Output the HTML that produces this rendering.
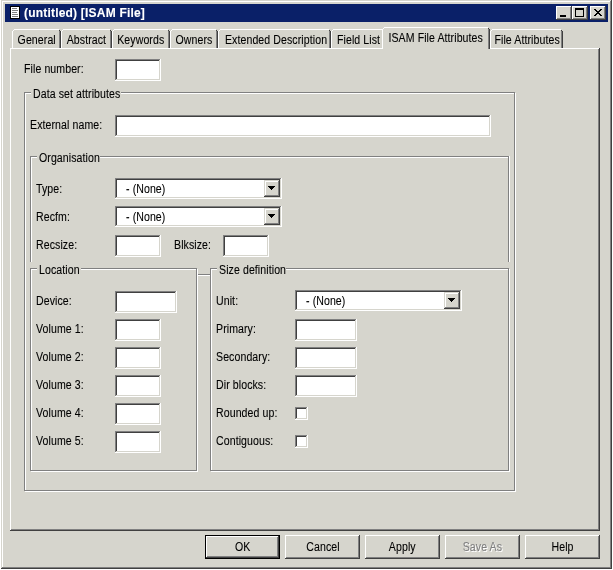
<!DOCTYPE html>
<html><head><meta charset="utf-8"><style>
html,body{margin:0;padding:0;width:613px;height:570px;overflow:hidden;background:#fff}
i{position:absolute;display:block}
.t{position:absolute;font-family:"Liberation Sans",sans-serif;font-size:12px;line-height:13px;white-space:nowrap;font-weight:normal;transform-origin:0 0;filter:grayscale(1);-webkit-text-stroke:0.1px currentColor;letter-spacing:0.1px}
.c{text-align:center;transform:none}
.c s{display:inline-block;text-decoration:none;transform-origin:50% 0}
.ic{position:absolute;display:block}
</style></head><body>
<i style="left:0px;top:0px;width:613px;height:570px;background:#ffffff"></i>
<i style="left:1px;top:0px;width:611px;height:569px;background:#d6d5cd"></i>
<i style="left:1px;top:0px;width:610px;height:1px;background:#d6d5cd"></i>
<i style="left:1px;top:0px;width:1px;height:568px;background:#d6d5cd"></i>
<i style="left:2px;top:1px;width:608px;height:1px;background:#ffffff"></i>
<i style="left:2px;top:1px;width:1px;height:566px;background:#ffffff"></i>
<i style="left:2px;top:567px;width:609px;height:1px;background:#808080"></i>
<i style="left:610px;top:1px;width:1px;height:567px;background:#808080"></i>
<i style="left:1px;top:568px;width:611px;height:1px;background:#404040"></i>
<i style="left:611px;top:0px;width:1px;height:569px;background:#404040"></i>
<i style="left:5px;top:4px;width:603px;height:18px;background:#0a2068"></i>
<i style="left:10px;top:6px;width:10px;height:13px;background:#000000"></i>
<i style="left:11px;top:7px;width:8px;height:11px;background:#ffffff"></i>
<i style="left:12px;top:8px;width:5px;height:1px;background:#808080"></i>
<i style="left:12px;top:10px;width:6px;height:1px;background:#808080"></i>
<i style="left:12px;top:12px;width:5px;height:1px;background:#808080"></i>
<i style="left:12px;top:14px;width:6px;height:1px;background:#808080"></i>
<i style="left:12px;top:16px;width:6px;height:1px;background:#808080"></i>
<b class="t" style="left:24px;top:7px;font-weight:bold;font-size:12px;color:#ffffff;transform:scaleX(1.0);letter-spacing:0.2px;">(untitled) [ISAM File]</b>
<i style="left:556px;top:6px;width:16px;height:14px;background:#d6d5cd"></i>
<i style="left:556px;top:6px;width:15px;height:1px;background:#ffffff"></i>
<i style="left:556px;top:6px;width:1px;height:13px;background:#ffffff"></i>
<i style="left:557px;top:7px;width:13px;height:1px;background:#d6d5cd"></i>
<i style="left:557px;top:7px;width:1px;height:11px;background:#d6d5cd"></i>
<i style="left:557px;top:18px;width:14px;height:1px;background:#808080"></i>
<i style="left:570px;top:7px;width:1px;height:12px;background:#808080"></i>
<i style="left:556px;top:19px;width:16px;height:1px;background:#404040"></i>
<i style="left:571px;top:6px;width:1px;height:14px;background:#404040"></i>
<i style="left:572px;top:6px;width:16px;height:14px;background:#d6d5cd"></i>
<i style="left:572px;top:6px;width:15px;height:1px;background:#ffffff"></i>
<i style="left:572px;top:6px;width:1px;height:13px;background:#ffffff"></i>
<i style="left:573px;top:7px;width:13px;height:1px;background:#d6d5cd"></i>
<i style="left:573px;top:7px;width:1px;height:11px;background:#d6d5cd"></i>
<i style="left:573px;top:18px;width:14px;height:1px;background:#808080"></i>
<i style="left:586px;top:7px;width:1px;height:12px;background:#808080"></i>
<i style="left:572px;top:19px;width:16px;height:1px;background:#404040"></i>
<i style="left:587px;top:6px;width:1px;height:14px;background:#404040"></i>
<i style="left:590px;top:6px;width:16px;height:14px;background:#d6d5cd"></i>
<i style="left:590px;top:6px;width:15px;height:1px;background:#ffffff"></i>
<i style="left:590px;top:6px;width:1px;height:13px;background:#ffffff"></i>
<i style="left:591px;top:7px;width:13px;height:1px;background:#d6d5cd"></i>
<i style="left:591px;top:7px;width:1px;height:11px;background:#d6d5cd"></i>
<i style="left:591px;top:18px;width:14px;height:1px;background:#808080"></i>
<i style="left:604px;top:7px;width:1px;height:12px;background:#808080"></i>
<i style="left:590px;top:19px;width:16px;height:1px;background:#404040"></i>
<i style="left:605px;top:6px;width:1px;height:14px;background:#404040"></i>
<i style="left:560px;top:15px;width:6px;height:2px;background:#000000"></i>
<i style="left:575px;top:8px;width:9px;height:9px;background:#000000"></i>
<i style="left:576px;top:10px;width:7px;height:6px;background:#d6d5cd"></i>
<svg class="ic" style="left:594px;top:9px" width="8" height="7" viewBox="0 0 8 7" shape-rendering="crispEdges"><rect x="0" y="0" width="2" height="1"/><rect x="6" y="0" width="2" height="1"/><rect x="1" y="1" width="2" height="1"/><rect x="5" y="1" width="2" height="1"/><rect x="2" y="2" width="2" height="1"/><rect x="4" y="2" width="2" height="1"/><rect x="3" y="3" width="2" height="1"/><rect x="3" y="3" width="2" height="1"/><rect x="4" y="4" width="2" height="1"/><rect x="2" y="4" width="2" height="1"/><rect x="5" y="5" width="2" height="1"/><rect x="1" y="5" width="2" height="1"/><rect x="6" y="6" width="2" height="1"/><rect x="0" y="6" width="2" height="1"/></svg>
<i style="left:10px;top:48px;width:589px;height:1px;background:#ffffff"></i>
<i style="left:10px;top:48px;width:1px;height:482px;background:#ffffff"></i>
<i style="left:11px;top:529px;width:588px;height:1px;background:#808080"></i>
<i style="left:598px;top:49px;width:1px;height:481px;background:#808080"></i>
<i style="left:10px;top:530px;width:590px;height:1px;background:#404040"></i>
<i style="left:599px;top:48px;width:1px;height:483px;background:#404040"></i>
<i style="left:12px;top:31px;width:1px;height:17px;background:#ffffff"></i>
<i style="left:13px;top:30px;width:1px;height:1px;background:#ffffff"></i>
<i style="left:14px;top:29px;width:45px;height:1px;background:#ffffff"></i>
<i style="left:59px;top:30px;width:1px;height:1px;background:#404040"></i>
<i style="left:59px;top:31px;width:1px;height:17px;background:#808080"></i>
<i style="left:60px;top:31px;width:1px;height:17px;background:#404040"></i>
<b class="t c" style="left:12px;top:34px;width:49px;color:#000000"><s style="transform:scaleX(0.88)">General</s></b>
<i style="left:61px;top:31px;width:1px;height:17px;background:#ffffff"></i>
<i style="left:62px;top:30px;width:1px;height:1px;background:#ffffff"></i>
<i style="left:63px;top:29px;width:47px;height:1px;background:#ffffff"></i>
<i style="left:110px;top:30px;width:1px;height:1px;background:#404040"></i>
<i style="left:110px;top:31px;width:1px;height:17px;background:#808080"></i>
<i style="left:111px;top:31px;width:1px;height:17px;background:#404040"></i>
<b class="t c" style="left:61px;top:34px;width:51px;color:#000000"><s style="transform:scaleX(0.88)">Abstract</s></b>
<i style="left:112px;top:31px;width:1px;height:17px;background:#ffffff"></i>
<i style="left:113px;top:30px;width:1px;height:1px;background:#ffffff"></i>
<i style="left:114px;top:29px;width:54px;height:1px;background:#ffffff"></i>
<i style="left:168px;top:30px;width:1px;height:1px;background:#404040"></i>
<i style="left:168px;top:31px;width:1px;height:17px;background:#808080"></i>
<i style="left:169px;top:31px;width:1px;height:17px;background:#404040"></i>
<b class="t c" style="left:112px;top:34px;width:58px;color:#000000"><s style="transform:scaleX(0.88)">Keywords</s></b>
<i style="left:170px;top:31px;width:1px;height:17px;background:#ffffff"></i>
<i style="left:171px;top:30px;width:1px;height:1px;background:#ffffff"></i>
<i style="left:172px;top:29px;width:44px;height:1px;background:#ffffff"></i>
<i style="left:216px;top:30px;width:1px;height:1px;background:#404040"></i>
<i style="left:216px;top:31px;width:1px;height:17px;background:#808080"></i>
<i style="left:217px;top:31px;width:1px;height:17px;background:#404040"></i>
<b class="t c" style="left:170px;top:34px;width:48px;color:#000000"><s style="transform:scaleX(0.88)">Owners</s></b>
<i style="left:218px;top:31px;width:1px;height:17px;background:#ffffff"></i>
<i style="left:219px;top:30px;width:1px;height:1px;background:#ffffff"></i>
<i style="left:220px;top:29px;width:109px;height:1px;background:#ffffff"></i>
<i style="left:329px;top:30px;width:1px;height:1px;background:#404040"></i>
<i style="left:329px;top:31px;width:1px;height:17px;background:#808080"></i>
<i style="left:330px;top:31px;width:1px;height:17px;background:#404040"></i>
<b class="t c" style="left:218px;top:34px;width:113px;color:#000000"><s style="transform:scaleX(0.88)">Extended Description</s></b>
<i style="left:331px;top:31px;width:1px;height:17px;background:#ffffff"></i>
<i style="left:332px;top:30px;width:1px;height:1px;background:#ffffff"></i>
<i style="left:333px;top:29px;width:51px;height:1px;background:#ffffff"></i>
<b class="t c" style="left:331px;top:34px;width:55px;color:#000000"><s style="transform:scaleX(0.88)">Field List</s></b>
<i style="left:490px;top:31px;width:1px;height:17px;background:#ffffff"></i>
<i style="left:491px;top:30px;width:1px;height:1px;background:#ffffff"></i>
<i style="left:492px;top:29px;width:69px;height:1px;background:#ffffff"></i>
<i style="left:561px;top:30px;width:1px;height:1px;background:#404040"></i>
<i style="left:561px;top:31px;width:1px;height:17px;background:#808080"></i>
<i style="left:562px;top:31px;width:1px;height:17px;background:#404040"></i>
<b class="t c" style="left:490px;top:34px;width:73px;color:#000000"><s style="transform:scaleX(0.88)">File Attributes</s></b>
<i style="left:382px;top:27px;width:108px;height:22px;background:#d6d5cd"></i>
<i style="left:382px;top:29px;width:1px;height:20px;background:#ffffff"></i>
<i style="left:383px;top:28px;width:1px;height:1px;background:#ffffff"></i>
<i style="left:384px;top:27px;width:104px;height:1px;background:#ffffff"></i>
<i style="left:488px;top:28px;width:1px;height:1px;background:#404040"></i>
<i style="left:488px;top:29px;width:1px;height:20px;background:#808080"></i>
<i style="left:489px;top:29px;width:1px;height:20px;background:#404040"></i>
<b class="t c" style="left:382px;top:32px;width:108px;color:#000000"><s style="transform:scaleX(0.88)">ISAM File Attributes</s></b>
<b class="t" style="left:24px;top:63px;font-size:12px;color:#000000;transform:scaleX(0.88);">File number:</b>
<i style="left:115px;top:59px;width:46px;height:22px;background:#ffffff"></i>
<i style="left:115px;top:59px;width:45px;height:1px;background:#808080"></i>
<i style="left:115px;top:59px;width:1px;height:21px;background:#808080"></i>
<i style="left:116px;top:60px;width:43px;height:1px;background:#404040"></i>
<i style="left:116px;top:60px;width:1px;height:19px;background:#404040"></i>
<i style="left:116px;top:79px;width:44px;height:1px;background:#d6d5cd"></i>
<i style="left:159px;top:60px;width:1px;height:20px;background:#d6d5cd"></i>
<i style="left:115px;top:80px;width:46px;height:1px;background:#ffffff"></i>
<i style="left:160px;top:59px;width:1px;height:22px;background:#ffffff"></i>
<i style="left:25px;top:93px;width:491px;height:1px;background:#ffffff"></i>
<i style="left:25px;top:93px;width:1px;height:399px;background:#ffffff"></i>
<i style="left:25px;top:491px;width:491px;height:1px;background:#ffffff"></i>
<i style="left:515px;top:93px;width:1px;height:399px;background:#ffffff"></i>
<i style="left:24px;top:92px;width:491px;height:1px;background:#808080"></i>
<i style="left:24px;top:92px;width:1px;height:399px;background:#808080"></i>
<i style="left:24px;top:490px;width:491px;height:1px;background:#808080"></i>
<i style="left:514px;top:92px;width:1px;height:399px;background:#808080"></i>
<i style="left:25px;top:93px;width:489px;height:1px;background:#ffffff"></i>
<i style="left:25px;top:93px;width:1px;height:397px;background:#ffffff"></i>
<i style="left:31px;top:92px;width:90px;height:2px;background:#d6d5cd"></i>
<b class="t" style="left:33px;top:88px;font-size:12px;color:#000000;transform:scaleX(0.88);">Data set attributes</b>
<b class="t" style="left:30px;top:119px;font-size:12px;color:#000000;transform:scaleX(0.88);">External name:</b>
<i style="left:115px;top:115px;width:376px;height:22px;background:#ffffff"></i>
<i style="left:115px;top:115px;width:375px;height:1px;background:#808080"></i>
<i style="left:115px;top:115px;width:1px;height:21px;background:#808080"></i>
<i style="left:116px;top:116px;width:373px;height:1px;background:#404040"></i>
<i style="left:116px;top:116px;width:1px;height:19px;background:#404040"></i>
<i style="left:116px;top:135px;width:374px;height:1px;background:#d6d5cd"></i>
<i style="left:489px;top:116px;width:1px;height:20px;background:#d6d5cd"></i>
<i style="left:115px;top:136px;width:376px;height:1px;background:#ffffff"></i>
<i style="left:490px;top:115px;width:1px;height:22px;background:#ffffff"></i>
<i style="left:30px;top:156px;width:1px;height:106px;background:#808080"></i>
<i style="left:31px;top:157px;width:1px;height:105px;background:#ffffff"></i>
<i style="left:508px;top:156px;width:1px;height:106px;background:#808080"></i>
<i style="left:509px;top:156px;width:1px;height:106px;background:#ffffff"></i>
<i style="left:30px;top:156px;width:479px;height:1px;background:#808080"></i>
<i style="left:31px;top:157px;width:477px;height:1px;background:#ffffff"></i>
<i style="left:37px;top:156px;width:63px;height:2px;background:#d6d5cd"></i>
<b class="t" style="left:39px;top:152px;font-size:12px;color:#000000;transform:scaleX(0.88);">Organisation</b>
<b class="t" style="left:36px;top:183px;font-size:12px;color:#000000;transform:scaleX(0.88);">Type:</b>
<i style="left:115px;top:178px;width:167px;height:21px;background:#ffffff"></i>
<i style="left:115px;top:178px;width:166px;height:1px;background:#808080"></i>
<i style="left:115px;top:178px;width:1px;height:20px;background:#808080"></i>
<i style="left:116px;top:179px;width:164px;height:1px;background:#404040"></i>
<i style="left:116px;top:179px;width:1px;height:18px;background:#404040"></i>
<i style="left:116px;top:197px;width:165px;height:1px;background:#d6d5cd"></i>
<i style="left:280px;top:179px;width:1px;height:19px;background:#d6d5cd"></i>
<i style="left:115px;top:198px;width:167px;height:1px;background:#ffffff"></i>
<i style="left:281px;top:178px;width:1px;height:21px;background:#ffffff"></i>
<i style="left:264px;top:180px;width:16px;height:17px;background:#d6d5cd"></i>
<i style="left:264px;top:180px;width:15px;height:1px;background:#d6d5cd"></i>
<i style="left:264px;top:180px;width:1px;height:16px;background:#d6d5cd"></i>
<i style="left:265px;top:181px;width:13px;height:1px;background:#ffffff"></i>
<i style="left:265px;top:181px;width:1px;height:14px;background:#ffffff"></i>
<i style="left:265px;top:195px;width:14px;height:1px;background:#808080"></i>
<i style="left:278px;top:181px;width:1px;height:15px;background:#808080"></i>
<i style="left:264px;top:196px;width:16px;height:1px;background:#404040"></i>
<i style="left:279px;top:180px;width:1px;height:17px;background:#404040"></i>
<i style="left:268px;top:186px;width:7px;height:1px;background:#000000"></i>
<i style="left:269px;top:187px;width:5px;height:1px;background:#000000"></i>
<i style="left:270px;top:188px;width:3px;height:1px;background:#000000"></i>
<i style="left:271px;top:189px;width:1px;height:1px;background:#000000"></i>
<b class="t" style="left:126px;top:183px;font-size:12px;color:#000000;transform:scaleX(0.88);">- (None)</b>
<b class="t" style="left:36px;top:211px;font-size:12px;color:#000000;transform:scaleX(0.88);">Recfm:</b>
<i style="left:115px;top:206px;width:167px;height:21px;background:#ffffff"></i>
<i style="left:115px;top:206px;width:166px;height:1px;background:#808080"></i>
<i style="left:115px;top:206px;width:1px;height:20px;background:#808080"></i>
<i style="left:116px;top:207px;width:164px;height:1px;background:#404040"></i>
<i style="left:116px;top:207px;width:1px;height:18px;background:#404040"></i>
<i style="left:116px;top:225px;width:165px;height:1px;background:#d6d5cd"></i>
<i style="left:280px;top:207px;width:1px;height:19px;background:#d6d5cd"></i>
<i style="left:115px;top:226px;width:167px;height:1px;background:#ffffff"></i>
<i style="left:281px;top:206px;width:1px;height:21px;background:#ffffff"></i>
<i style="left:264px;top:208px;width:16px;height:17px;background:#d6d5cd"></i>
<i style="left:264px;top:208px;width:15px;height:1px;background:#d6d5cd"></i>
<i style="left:264px;top:208px;width:1px;height:16px;background:#d6d5cd"></i>
<i style="left:265px;top:209px;width:13px;height:1px;background:#ffffff"></i>
<i style="left:265px;top:209px;width:1px;height:14px;background:#ffffff"></i>
<i style="left:265px;top:223px;width:14px;height:1px;background:#808080"></i>
<i style="left:278px;top:209px;width:1px;height:15px;background:#808080"></i>
<i style="left:264px;top:224px;width:16px;height:1px;background:#404040"></i>
<i style="left:279px;top:208px;width:1px;height:17px;background:#404040"></i>
<i style="left:268px;top:214px;width:7px;height:1px;background:#000000"></i>
<i style="left:269px;top:215px;width:5px;height:1px;background:#000000"></i>
<i style="left:270px;top:216px;width:3px;height:1px;background:#000000"></i>
<i style="left:271px;top:217px;width:1px;height:1px;background:#000000"></i>
<b class="t" style="left:126px;top:211px;font-size:12px;color:#000000;transform:scaleX(0.88);">- (None)</b>
<b class="t" style="left:36px;top:239px;font-size:12px;color:#000000;transform:scaleX(0.88);">Recsize:</b>
<i style="left:115px;top:235px;width:46px;height:22px;background:#ffffff"></i>
<i style="left:115px;top:235px;width:45px;height:1px;background:#808080"></i>
<i style="left:115px;top:235px;width:1px;height:21px;background:#808080"></i>
<i style="left:116px;top:236px;width:43px;height:1px;background:#404040"></i>
<i style="left:116px;top:236px;width:1px;height:19px;background:#404040"></i>
<i style="left:116px;top:255px;width:44px;height:1px;background:#d6d5cd"></i>
<i style="left:159px;top:236px;width:1px;height:20px;background:#d6d5cd"></i>
<i style="left:115px;top:256px;width:46px;height:1px;background:#ffffff"></i>
<i style="left:160px;top:235px;width:1px;height:22px;background:#ffffff"></i>
<b class="t" style="left:174px;top:239px;font-size:12px;color:#000000;transform:scaleX(0.88);">Blksize:</b>
<i style="left:223px;top:235px;width:46px;height:22px;background:#ffffff"></i>
<i style="left:223px;top:235px;width:45px;height:1px;background:#808080"></i>
<i style="left:223px;top:235px;width:1px;height:21px;background:#808080"></i>
<i style="left:224px;top:236px;width:43px;height:1px;background:#404040"></i>
<i style="left:224px;top:236px;width:1px;height:19px;background:#404040"></i>
<i style="left:224px;top:255px;width:44px;height:1px;background:#d6d5cd"></i>
<i style="left:267px;top:236px;width:1px;height:20px;background:#d6d5cd"></i>
<i style="left:223px;top:256px;width:46px;height:1px;background:#ffffff"></i>
<i style="left:268px;top:235px;width:1px;height:22px;background:#ffffff"></i>
<i style="left:197px;top:274px;width:13px;height:1px;background:#808080"></i>
<i style="left:197px;top:275px;width:13px;height:1px;background:#ffffff"></i>
<i style="left:31px;top:269px;width:167px;height:1px;background:#ffffff"></i>
<i style="left:31px;top:269px;width:1px;height:203px;background:#ffffff"></i>
<i style="left:31px;top:471px;width:167px;height:1px;background:#ffffff"></i>
<i style="left:197px;top:269px;width:1px;height:203px;background:#ffffff"></i>
<i style="left:30px;top:268px;width:167px;height:1px;background:#808080"></i>
<i style="left:30px;top:268px;width:1px;height:203px;background:#808080"></i>
<i style="left:30px;top:470px;width:167px;height:1px;background:#808080"></i>
<i style="left:196px;top:268px;width:1px;height:203px;background:#808080"></i>
<i style="left:31px;top:269px;width:165px;height:1px;background:#ffffff"></i>
<i style="left:31px;top:269px;width:1px;height:201px;background:#ffffff"></i>
<i style="left:37px;top:268px;width:44px;height:2px;background:#d6d5cd"></i>
<b class="t" style="left:39px;top:264px;font-size:12px;color:#000000;transform:scaleX(0.88);">Location</b>
<b class="t" style="left:36px;top:295px;font-size:12px;color:#000000;transform:scaleX(0.88);">Device:</b>
<i style="left:115px;top:291px;width:62px;height:22px;background:#ffffff"></i>
<i style="left:115px;top:291px;width:61px;height:1px;background:#808080"></i>
<i style="left:115px;top:291px;width:1px;height:21px;background:#808080"></i>
<i style="left:116px;top:292px;width:59px;height:1px;background:#404040"></i>
<i style="left:116px;top:292px;width:1px;height:19px;background:#404040"></i>
<i style="left:116px;top:311px;width:60px;height:1px;background:#d6d5cd"></i>
<i style="left:175px;top:292px;width:1px;height:20px;background:#d6d5cd"></i>
<i style="left:115px;top:312px;width:62px;height:1px;background:#ffffff"></i>
<i style="left:176px;top:291px;width:1px;height:22px;background:#ffffff"></i>
<b class="t" style="left:36px;top:323px;font-size:12px;color:#000000;transform:scaleX(0.88);">Volume 1:</b>
<i style="left:115px;top:319px;width:46px;height:22px;background:#ffffff"></i>
<i style="left:115px;top:319px;width:45px;height:1px;background:#808080"></i>
<i style="left:115px;top:319px;width:1px;height:21px;background:#808080"></i>
<i style="left:116px;top:320px;width:43px;height:1px;background:#404040"></i>
<i style="left:116px;top:320px;width:1px;height:19px;background:#404040"></i>
<i style="left:116px;top:339px;width:44px;height:1px;background:#d6d5cd"></i>
<i style="left:159px;top:320px;width:1px;height:20px;background:#d6d5cd"></i>
<i style="left:115px;top:340px;width:46px;height:1px;background:#ffffff"></i>
<i style="left:160px;top:319px;width:1px;height:22px;background:#ffffff"></i>
<b class="t" style="left:36px;top:351px;font-size:12px;color:#000000;transform:scaleX(0.88);">Volume 2:</b>
<i style="left:115px;top:347px;width:46px;height:22px;background:#ffffff"></i>
<i style="left:115px;top:347px;width:45px;height:1px;background:#808080"></i>
<i style="left:115px;top:347px;width:1px;height:21px;background:#808080"></i>
<i style="left:116px;top:348px;width:43px;height:1px;background:#404040"></i>
<i style="left:116px;top:348px;width:1px;height:19px;background:#404040"></i>
<i style="left:116px;top:367px;width:44px;height:1px;background:#d6d5cd"></i>
<i style="left:159px;top:348px;width:1px;height:20px;background:#d6d5cd"></i>
<i style="left:115px;top:368px;width:46px;height:1px;background:#ffffff"></i>
<i style="left:160px;top:347px;width:1px;height:22px;background:#ffffff"></i>
<b class="t" style="left:36px;top:379px;font-size:12px;color:#000000;transform:scaleX(0.88);">Volume 3:</b>
<i style="left:115px;top:375px;width:46px;height:22px;background:#ffffff"></i>
<i style="left:115px;top:375px;width:45px;height:1px;background:#808080"></i>
<i style="left:115px;top:375px;width:1px;height:21px;background:#808080"></i>
<i style="left:116px;top:376px;width:43px;height:1px;background:#404040"></i>
<i style="left:116px;top:376px;width:1px;height:19px;background:#404040"></i>
<i style="left:116px;top:395px;width:44px;height:1px;background:#d6d5cd"></i>
<i style="left:159px;top:376px;width:1px;height:20px;background:#d6d5cd"></i>
<i style="left:115px;top:396px;width:46px;height:1px;background:#ffffff"></i>
<i style="left:160px;top:375px;width:1px;height:22px;background:#ffffff"></i>
<b class="t" style="left:36px;top:407px;font-size:12px;color:#000000;transform:scaleX(0.88);">Volume 4:</b>
<i style="left:115px;top:403px;width:46px;height:22px;background:#ffffff"></i>
<i style="left:115px;top:403px;width:45px;height:1px;background:#808080"></i>
<i style="left:115px;top:403px;width:1px;height:21px;background:#808080"></i>
<i style="left:116px;top:404px;width:43px;height:1px;background:#404040"></i>
<i style="left:116px;top:404px;width:1px;height:19px;background:#404040"></i>
<i style="left:116px;top:423px;width:44px;height:1px;background:#d6d5cd"></i>
<i style="left:159px;top:404px;width:1px;height:20px;background:#d6d5cd"></i>
<i style="left:115px;top:424px;width:46px;height:1px;background:#ffffff"></i>
<i style="left:160px;top:403px;width:1px;height:22px;background:#ffffff"></i>
<b class="t" style="left:36px;top:435px;font-size:12px;color:#000000;transform:scaleX(0.88);">Volume 5:</b>
<i style="left:115px;top:431px;width:46px;height:22px;background:#ffffff"></i>
<i style="left:115px;top:431px;width:45px;height:1px;background:#808080"></i>
<i style="left:115px;top:431px;width:1px;height:21px;background:#808080"></i>
<i style="left:116px;top:432px;width:43px;height:1px;background:#404040"></i>
<i style="left:116px;top:432px;width:1px;height:19px;background:#404040"></i>
<i style="left:116px;top:451px;width:44px;height:1px;background:#d6d5cd"></i>
<i style="left:159px;top:432px;width:1px;height:20px;background:#d6d5cd"></i>
<i style="left:115px;top:452px;width:46px;height:1px;background:#ffffff"></i>
<i style="left:160px;top:431px;width:1px;height:22px;background:#ffffff"></i>
<i style="left:211px;top:269px;width:299px;height:1px;background:#ffffff"></i>
<i style="left:211px;top:269px;width:1px;height:203px;background:#ffffff"></i>
<i style="left:211px;top:471px;width:299px;height:1px;background:#ffffff"></i>
<i style="left:509px;top:269px;width:1px;height:203px;background:#ffffff"></i>
<i style="left:210px;top:268px;width:299px;height:1px;background:#808080"></i>
<i style="left:210px;top:268px;width:1px;height:203px;background:#808080"></i>
<i style="left:210px;top:470px;width:299px;height:1px;background:#808080"></i>
<i style="left:508px;top:268px;width:1px;height:203px;background:#808080"></i>
<i style="left:211px;top:269px;width:297px;height:1px;background:#ffffff"></i>
<i style="left:211px;top:269px;width:1px;height:201px;background:#ffffff"></i>
<i style="left:217px;top:268px;width:69px;height:2px;background:#d6d5cd"></i>
<b class="t" style="left:219px;top:264px;font-size:12px;color:#000000;transform:scaleX(0.88);">Size definition</b>
<b class="t" style="left:216px;top:295px;font-size:12px;color:#000000;transform:scaleX(0.88);">Unit:</b>
<i style="left:295px;top:290px;width:167px;height:21px;background:#ffffff"></i>
<i style="left:295px;top:290px;width:166px;height:1px;background:#808080"></i>
<i style="left:295px;top:290px;width:1px;height:20px;background:#808080"></i>
<i style="left:296px;top:291px;width:164px;height:1px;background:#404040"></i>
<i style="left:296px;top:291px;width:1px;height:18px;background:#404040"></i>
<i style="left:296px;top:309px;width:165px;height:1px;background:#d6d5cd"></i>
<i style="left:460px;top:291px;width:1px;height:19px;background:#d6d5cd"></i>
<i style="left:295px;top:310px;width:167px;height:1px;background:#ffffff"></i>
<i style="left:461px;top:290px;width:1px;height:21px;background:#ffffff"></i>
<i style="left:444px;top:292px;width:16px;height:17px;background:#d6d5cd"></i>
<i style="left:444px;top:292px;width:15px;height:1px;background:#d6d5cd"></i>
<i style="left:444px;top:292px;width:1px;height:16px;background:#d6d5cd"></i>
<i style="left:445px;top:293px;width:13px;height:1px;background:#ffffff"></i>
<i style="left:445px;top:293px;width:1px;height:14px;background:#ffffff"></i>
<i style="left:445px;top:307px;width:14px;height:1px;background:#808080"></i>
<i style="left:458px;top:293px;width:1px;height:15px;background:#808080"></i>
<i style="left:444px;top:308px;width:16px;height:1px;background:#404040"></i>
<i style="left:459px;top:292px;width:1px;height:17px;background:#404040"></i>
<i style="left:448px;top:298px;width:7px;height:1px;background:#000000"></i>
<i style="left:449px;top:299px;width:5px;height:1px;background:#000000"></i>
<i style="left:450px;top:300px;width:3px;height:1px;background:#000000"></i>
<i style="left:451px;top:301px;width:1px;height:1px;background:#000000"></i>
<b class="t" style="left:306px;top:295px;font-size:12px;color:#000000;transform:scaleX(0.88);">- (None)</b>
<b class="t" style="left:216px;top:323px;font-size:12px;color:#000000;transform:scaleX(0.88);">Primary:</b>
<i style="left:295px;top:319px;width:62px;height:22px;background:#ffffff"></i>
<i style="left:295px;top:319px;width:61px;height:1px;background:#808080"></i>
<i style="left:295px;top:319px;width:1px;height:21px;background:#808080"></i>
<i style="left:296px;top:320px;width:59px;height:1px;background:#404040"></i>
<i style="left:296px;top:320px;width:1px;height:19px;background:#404040"></i>
<i style="left:296px;top:339px;width:60px;height:1px;background:#d6d5cd"></i>
<i style="left:355px;top:320px;width:1px;height:20px;background:#d6d5cd"></i>
<i style="left:295px;top:340px;width:62px;height:1px;background:#ffffff"></i>
<i style="left:356px;top:319px;width:1px;height:22px;background:#ffffff"></i>
<b class="t" style="left:216px;top:351px;font-size:12px;color:#000000;transform:scaleX(0.88);">Secondary:</b>
<i style="left:295px;top:347px;width:62px;height:22px;background:#ffffff"></i>
<i style="left:295px;top:347px;width:61px;height:1px;background:#808080"></i>
<i style="left:295px;top:347px;width:1px;height:21px;background:#808080"></i>
<i style="left:296px;top:348px;width:59px;height:1px;background:#404040"></i>
<i style="left:296px;top:348px;width:1px;height:19px;background:#404040"></i>
<i style="left:296px;top:367px;width:60px;height:1px;background:#d6d5cd"></i>
<i style="left:355px;top:348px;width:1px;height:20px;background:#d6d5cd"></i>
<i style="left:295px;top:368px;width:62px;height:1px;background:#ffffff"></i>
<i style="left:356px;top:347px;width:1px;height:22px;background:#ffffff"></i>
<b class="t" style="left:216px;top:379px;font-size:12px;color:#000000;transform:scaleX(0.88);">Dir blocks:</b>
<i style="left:295px;top:375px;width:62px;height:22px;background:#ffffff"></i>
<i style="left:295px;top:375px;width:61px;height:1px;background:#808080"></i>
<i style="left:295px;top:375px;width:1px;height:21px;background:#808080"></i>
<i style="left:296px;top:376px;width:59px;height:1px;background:#404040"></i>
<i style="left:296px;top:376px;width:1px;height:19px;background:#404040"></i>
<i style="left:296px;top:395px;width:60px;height:1px;background:#d6d5cd"></i>
<i style="left:355px;top:376px;width:1px;height:20px;background:#d6d5cd"></i>
<i style="left:295px;top:396px;width:62px;height:1px;background:#ffffff"></i>
<i style="left:356px;top:375px;width:1px;height:22px;background:#ffffff"></i>
<b class="t" style="left:216px;top:407px;font-size:12px;color:#000000;transform:scaleX(0.88);">Rounded up:</b>
<i style="left:295px;top:407px;width:13px;height:13px;background:#ffffff"></i>
<i style="left:295px;top:407px;width:12px;height:1px;background:#808080"></i>
<i style="left:295px;top:407px;width:1px;height:12px;background:#808080"></i>
<i style="left:296px;top:408px;width:10px;height:1px;background:#404040"></i>
<i style="left:296px;top:408px;width:1px;height:10px;background:#404040"></i>
<i style="left:296px;top:418px;width:11px;height:1px;background:#d6d5cd"></i>
<i style="left:306px;top:408px;width:1px;height:11px;background:#d6d5cd"></i>
<i style="left:295px;top:419px;width:13px;height:1px;background:#ffffff"></i>
<i style="left:307px;top:407px;width:1px;height:13px;background:#ffffff"></i>
<b class="t" style="left:216px;top:435px;font-size:12px;color:#000000;transform:scaleX(0.88);">Contiguous:</b>
<i style="left:295px;top:435px;width:13px;height:13px;background:#ffffff"></i>
<i style="left:295px;top:435px;width:12px;height:1px;background:#808080"></i>
<i style="left:295px;top:435px;width:1px;height:12px;background:#808080"></i>
<i style="left:296px;top:436px;width:10px;height:1px;background:#404040"></i>
<i style="left:296px;top:436px;width:1px;height:10px;background:#404040"></i>
<i style="left:296px;top:446px;width:11px;height:1px;background:#d6d5cd"></i>
<i style="left:306px;top:436px;width:1px;height:11px;background:#d6d5cd"></i>
<i style="left:295px;top:447px;width:13px;height:1px;background:#ffffff"></i>
<i style="left:307px;top:435px;width:1px;height:13px;background:#ffffff"></i>
<i style="left:205px;top:535px;width:75px;height:24px;background:#000000"></i>
<i style="left:206px;top:536px;width:73px;height:22px;background:#d6d5cd"></i>
<i style="left:206px;top:536px;width:72px;height:1px;background:#ffffff"></i>
<i style="left:206px;top:536px;width:1px;height:21px;background:#ffffff"></i>
<i style="left:207px;top:537px;width:70px;height:1px;background:#d6d5cd"></i>
<i style="left:207px;top:537px;width:1px;height:19px;background:#d6d5cd"></i>
<i style="left:207px;top:556px;width:71px;height:1px;background:#808080"></i>
<i style="left:277px;top:537px;width:1px;height:20px;background:#808080"></i>
<i style="left:206px;top:557px;width:73px;height:1px;background:#404040"></i>
<i style="left:278px;top:536px;width:1px;height:22px;background:#404040"></i>
<b class="t c" style="left:205px;top:541px;width:75px;color:#000000"><s style="transform:scaleX(0.88)">OK</s></b>
<i style="left:285px;top:535px;width:75px;height:24px;background:#d6d5cd"></i>
<i style="left:285px;top:535px;width:74px;height:1px;background:#ffffff"></i>
<i style="left:285px;top:535px;width:1px;height:23px;background:#ffffff"></i>
<i style="left:286px;top:536px;width:72px;height:1px;background:#d6d5cd"></i>
<i style="left:286px;top:536px;width:1px;height:21px;background:#d6d5cd"></i>
<i style="left:286px;top:557px;width:73px;height:1px;background:#808080"></i>
<i style="left:358px;top:536px;width:1px;height:22px;background:#808080"></i>
<i style="left:285px;top:558px;width:75px;height:1px;background:#404040"></i>
<i style="left:359px;top:535px;width:1px;height:24px;background:#404040"></i>
<b class="t c" style="left:285px;top:541px;width:75px;color:#000000"><s style="transform:scaleX(0.88)">Cancel</s></b>
<i style="left:365px;top:535px;width:75px;height:24px;background:#d6d5cd"></i>
<i style="left:365px;top:535px;width:74px;height:1px;background:#ffffff"></i>
<i style="left:365px;top:535px;width:1px;height:23px;background:#ffffff"></i>
<i style="left:366px;top:536px;width:72px;height:1px;background:#d6d5cd"></i>
<i style="left:366px;top:536px;width:1px;height:21px;background:#d6d5cd"></i>
<i style="left:366px;top:557px;width:73px;height:1px;background:#808080"></i>
<i style="left:438px;top:536px;width:1px;height:22px;background:#808080"></i>
<i style="left:365px;top:558px;width:75px;height:1px;background:#404040"></i>
<i style="left:439px;top:535px;width:1px;height:24px;background:#404040"></i>
<b class="t c" style="left:365px;top:541px;width:75px;color:#000000"><s style="transform:scaleX(0.88)">Apply</s></b>
<i style="left:445px;top:535px;width:75px;height:24px;background:#d6d5cd"></i>
<i style="left:445px;top:535px;width:74px;height:1px;background:#ffffff"></i>
<i style="left:445px;top:535px;width:1px;height:23px;background:#ffffff"></i>
<i style="left:446px;top:536px;width:72px;height:1px;background:#d6d5cd"></i>
<i style="left:446px;top:536px;width:1px;height:21px;background:#d6d5cd"></i>
<i style="left:446px;top:557px;width:73px;height:1px;background:#808080"></i>
<i style="left:518px;top:536px;width:1px;height:22px;background:#808080"></i>
<i style="left:445px;top:558px;width:75px;height:1px;background:#404040"></i>
<i style="left:519px;top:535px;width:1px;height:24px;background:#404040"></i>

<b class="t c" style="left:446px;top:542px;width:75px;color:#ffffff"><s style="transform:scaleX(0.88)">Save As</s></b>
<b class="t c" style="left:445px;top:541px;width:75px;color:#808080"><s style="transform:scaleX(0.88)">Save As</s></b>
<i style="left:525px;top:535px;width:75px;height:24px;background:#d6d5cd"></i>
<i style="left:525px;top:535px;width:74px;height:1px;background:#ffffff"></i>
<i style="left:525px;top:535px;width:1px;height:23px;background:#ffffff"></i>
<i style="left:526px;top:536px;width:72px;height:1px;background:#d6d5cd"></i>
<i style="left:526px;top:536px;width:1px;height:21px;background:#d6d5cd"></i>
<i style="left:526px;top:557px;width:73px;height:1px;background:#808080"></i>
<i style="left:598px;top:536px;width:1px;height:22px;background:#808080"></i>
<i style="left:525px;top:558px;width:75px;height:1px;background:#404040"></i>
<i style="left:599px;top:535px;width:1px;height:24px;background:#404040"></i>
<b class="t c" style="left:525px;top:541px;width:75px;color:#000000"><s style="transform:scaleX(0.88)">Help</s></b>
</body></html>
